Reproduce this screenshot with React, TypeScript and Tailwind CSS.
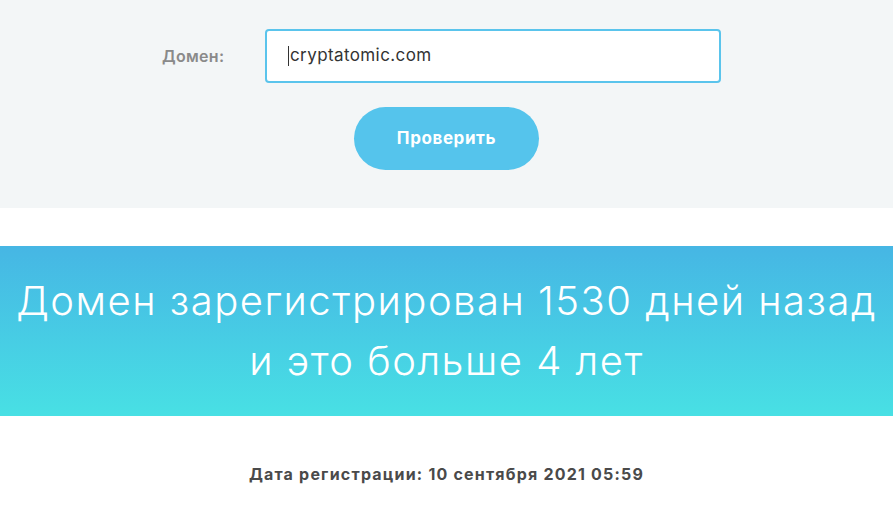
import React from "react";

export default function App() {
  return (
    <div className="w-[893px] h-[506px] bg-white overflow-hidden" style={{ fontFamily: "Inter, 'Open Sans', sans-serif" }}>
      <section className="h-[208px] bg-[#f3f6f7] pt-[29px] flex flex-col items-center">
        <div className="flex items-center pr-[10px]">
          <label className="w-[103px] text-[16px] font-semibold tracking-[0.3px] text-[#8a8a8a]">Домен:</label>
          <div className="w-[456px] h-[54px] bg-white border-2 border-[#5ac4ec] rounded-[4px] flex items-center pl-[21px] text-[17px] tracking-[0.4px] text-[#333]">
            <span className="w-px h-[20px] bg-[#333] mr-[1px]"></span>
            <span>cryptatomic.com</span>
          </div>
        </div>
        <button className="mt-[24px] w-[185px] h-[63px] rounded-full bg-[#55c4ec] text-white text-[17px] tracking-[0.6px] font-bold">
          Проверить
        </button>
      </section>
      <div className="h-[38px]"></div>
      <section className="h-[170px] bg-gradient-to-b from-[#46b6e4] to-[#48e0e4] flex flex-col items-center justify-center text-white text-[40px] font-light tracking-[1.5px] leading-[60px] text-center">
        <div>Домен зарегистрирован 1530 дней назад</div>
        <div>и это больше 4 лет</div>
      </section>
      <div className="pt-[46px] text-center text-[16px] font-bold tracking-[1.2px] text-[#4a4a4a]">
        Дата регистрации: 10 сентября 2021 05:59
      </div>
    </div>
  );
}
